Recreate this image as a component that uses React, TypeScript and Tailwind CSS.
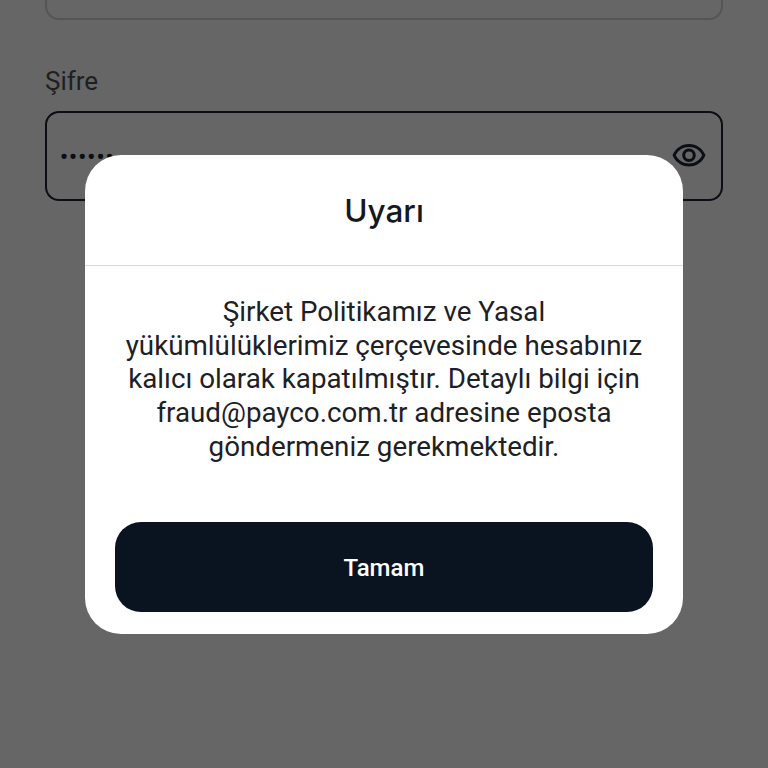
import { MdOutlineVisibility } from 'react-icons/md';

const App = () => (
  <main className="relative h-[768px] w-full overflow-hidden bg-[#666666] px-[45px] font-['Roboto',sans-serif]">
    <div className="-mt-[70px] h-[90px] rounded-[14px] border-2 border-[#555555]" />
    <label className="mt-[43px] block text-[26px] leading-[36px] text-[#1d1f22]">Şifre</label>
    <div className="mt-[12px] flex h-[90px] items-center justify-between rounded-[14px] border-2 border-[#0b0f14] pl-[13px] pr-[14px]">
      <span className="text-[22px] font-bold tracking-[1.2px] text-[#0b0f14]">••••••</span>
      <MdOutlineVisibility className="h-[36px] w-[36px] text-[#0b0f14]" />
    </div>

    <div className="absolute left-[85px] top-[155px] flex h-[479px] w-[598px] flex-col rounded-[36px] bg-white">
      <h2 className="flex h-[111px] items-center justify-center border-b border-[#d8d8d8] pt-[2px] font-['Inter',sans-serif] text-[31.5px] font-medium text-[#14181f]">
        Uyarı
      </h2>
      <p className="mt-[29px] px-[20px] text-center text-[27.75px] leading-[33.7px] text-[#1d2126]">
        Şirket Politikamız ve Yasal
        <br />
        yükümlülüklerimiz çerçevesinde hesabınız
        <br />
        kalıcı olarak kapatılmıştır. Detaylı bilgi için
        <br />
        fraud@payco.com.tr adresine eposta
        <br />
        göndermeniz gerekmektedir.
      </p>
      <button className="mx-[30px] mt-[58px] h-[90px] rounded-[26px] bg-[#0a1320] pt-[2px] text-[24px] font-medium text-white">
        Tamam
      </button>
    </div>
  </main>
);

export default App;
